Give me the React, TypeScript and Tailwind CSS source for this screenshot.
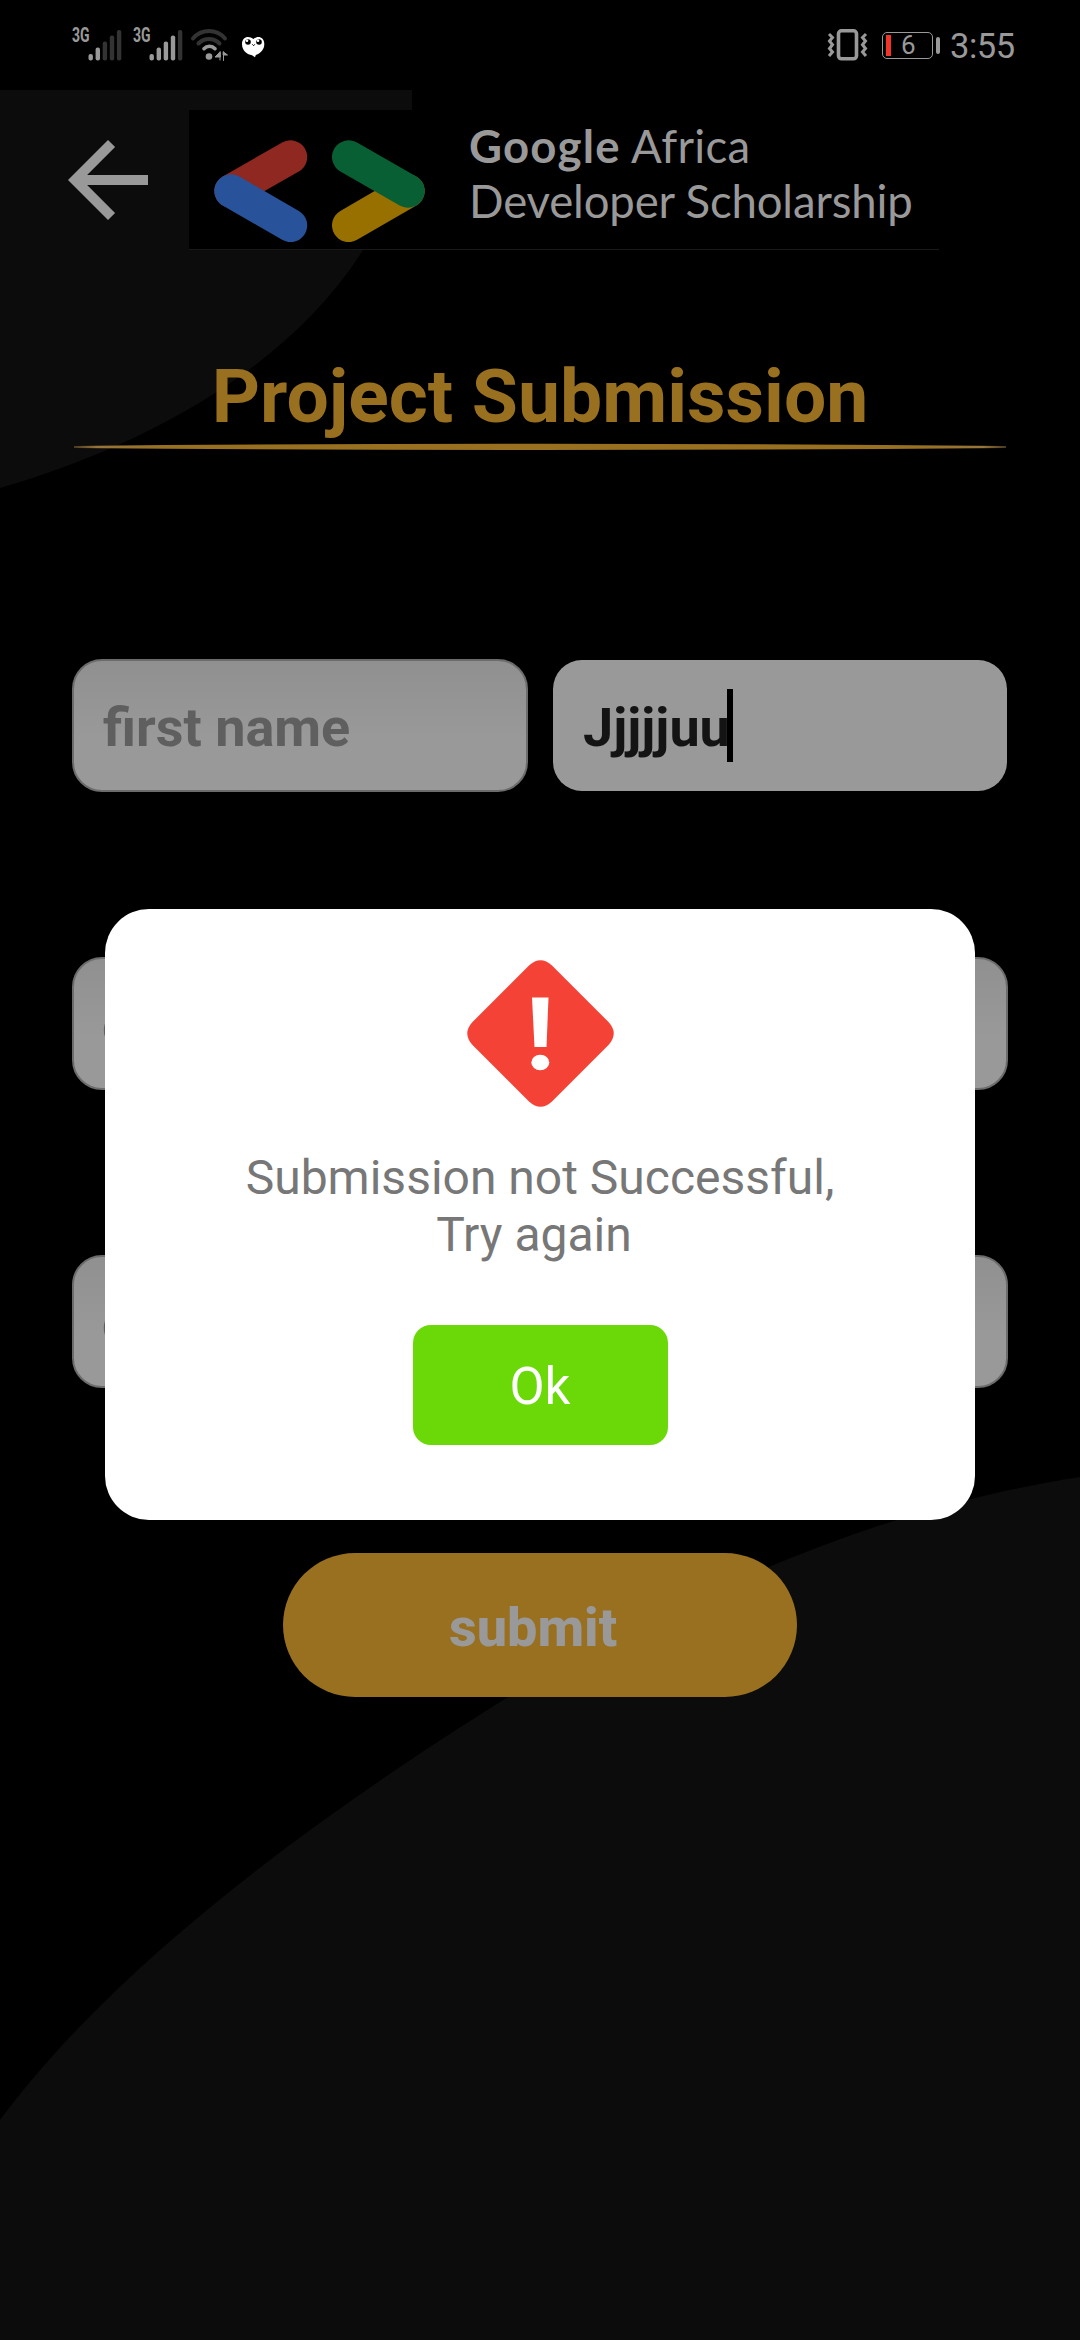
const heights = [6.5, 13, 19, 25, 30.5];

function Signal({ active }: { active: number }) {
  return (
    <div className="relative h-8 w-[50px]">
      <span className="absolute left-0 top-0 origin-top-left scale-x-[.72] font-bold text-[19.5px] leading-[14px] text-[#999]">3G</span>
      <svg viewBox="0 0 50 32" className="absolute inset-0 h-8 w-[50px]">
        {heights.map((h, i) => (
          <rect key={i} x={16.5 + i * 7.1} y={31.5 - h} width="4.4" height={h} rx="2" fill={i < active ? "#999" : "#333"} />
        ))}
      </svg>
    </div>
  );
}

function StatusBar() {
  return (
    <div className="flex h-[90px] items-start bg-black pl-[72px] pr-[66px] pt-[29px] text-[#999]">
      <Signal active={2} />
      <div className="ml-[11px]">
        <Signal active={4} />
      </div>
      <svg viewBox="0 0 40 32" className="ml-[7px] h-8 w-10" fill="none" strokeLinecap="round">
        <path d="M3 9.5C11.500-.4 26.500-.4 35 9.500" stroke="#333" strokeWidth="4" />
        <path d="M8.500 14.500C14.500 8.500 23.500 8.500 29.500 14.500" stroke="#333" strokeWidth="4" />
        <path d="M14 19.700C17 16.500 22 16.500 25 19.700" stroke="#999" strokeWidth="3.600" />
        <circle cx="19" cy="27.500" r="3.300" fill="#999" />
        <path d="M30 23v8M30 23l-5 5h5zM33.500 23v8.500M33.500 23l4 3h-4z" stroke="#999" strokeWidth="1" fill="#999" />
      </svg>
      <svg viewBox="0 0 24 22" className="ml-[11px] mt-[6.500px] h-[22px] w-6">
        <path d="M12.500 3C8-.8 1 .3 1 8c0 7 5.500 10.500 10 11.300l3 1.900.8-2.200C20 17 23.300 13.500 23.300 8c0-7.500-7-8.800-10.800-5z" fill="#fff" />
        <circle cx="7" cy="6" r="2.800" fill="#000" />
        <circle cx="18" cy="6" r="2.800" fill="#000" />
        <circle cx="6" cy="4.700" r="1.300" fill="#fff" />
        <circle cx="17" cy="4.700" r="1.300" fill="#fff" />
        <path d="M11.300 8.300l1.300 1.400 1.200-1.400" stroke="#000" fill="none" />
      </svg>
      <div className="grow" />
      <svg viewBox="0 0 42 32" className="h-8 w-[42px]" fill="none" stroke="#999">
        <rect x="11.500" y="1.800" width="18" height="28" rx="3" strokeWidth="3.600" />
        <path d="M2 5l3.500 3.500L2.500 12l3 3.700-3 3.800 3 3.500L2 27M39 5l-3.500 3.500 3 3.500-3 3.700 3 3.800-3 3.500L39 27" strokeWidth="3" />
      </svg>
      <div className="ml-[13px] mt-[3px] flex h-[27px] w-[51px] items-center rounded-[5px] border border-[#999] pl-[3px]">
        <div className="h-[21px] w-[5px] bg-[#f03528]" />
        <div className="ml-[10px] text-[26px] leading-[27px]">6</div>
      </div>
      <div className="ml-[3px] mt-[8px] h-[17px] w-1 rounded-sm bg-[#999]" />
      <div className="ml-[10px] mt-[-3px] w-[64px] whitespace-nowrap text-[34.500px] leading-[40px] tracking-[-0.5px]">3:55</div>
    </div>
  );
}

function GadsLogo() {
  return (
    <svg viewBox="214 140 211 103" className="h-[103px] w-[211px]" fill="none" strokeWidth="33.400" strokeLinecap="round">
      <path d="M290.500 157L231 191" stroke="#8f2820" />
      <path d="M231 191L290.500 225.400" stroke="#28529a" />
      <path d="M348.700 225.400L408 191" stroke="#987000" />
      <path d="M348.700 157L408 191" stroke="#085f34" />
    </svg>
  );
}

function Header() {
  return (
    <header className="flex h-[160px]">
      <div className="flex h-[160px] w-[189px] items-center pl-12 pt-5">
        <svg viewBox="0 0 24 24" className="h-[120px] w-[120px]" fill="#999">
          <path d="M20 11H7.830l5.590-5.590L12 4l-8 8 8 8 1.410-1.410L7.830 13H20v-2z" />
        </svg>
      </div>
      <div className="mt-5 flex h-[140px] w-[750px] items-start border-b border-[#191919] bg-black pl-[25px] pt-[30px]">
        <GadsLogo />
        <div className="ml-[44px] mt-[-22px] whitespace-nowrap font-['Lato',sans-serif] text-[45.500px] leading-[55px] text-[#999]">
          <div className="tracking-[0.3px]"><b className="tracking-[1.2px]">Google</b> Africa</div>
          <div className="tracking-[-0.15px]">Developer Scholarship</div>
        </div>
      </div>
    </header>
  );
}

const field = "flex h-[133px] items-center rounded-[30px] border-2 border-[#6c6c6c] bg-linear-to-b from-[#909090] to-[#999] to-60% pt-[3px] text-[54px] font-bold text-[#5f5f5f]";

function Dialog() {
  return (
    <div className="absolute left-[105px] top-[909px] flex h-[611px] w-[870px] flex-col items-center rounded-[44px] bg-white pt-[51px]">
      <svg viewBox="0 0 147 147" className="h-[147px] w-[147px]">
        <path d="M62 5.500Q73.500-5 85 5.500L141.500 62Q152 73.500 141.500 85L85 141.500Q73.500 152 62 141.500L5.500 85Q-5 73.500 5.500 62Z" fill="#f44336" />
        <path d="M65 37.500h16.500L79.500 87H67.500z" fill="#fff" />
        <ellipse cx="73.300" cy="102.500" rx="9" ry="7.700" fill="#fff" />
      </svg>
      <p className="mt-[42px] whitespace-pre text-center text-[48px] leading-[57px] text-[#777]">
        Submission not Successful,
        <br />
        <span className="pr-[12px]">Try again</span>
      </p>
      <button className="mt-[62px] h-[120px] w-[255px] rounded-[18px] bg-[#6bd807] pt-[5px] text-[51px] text-white">Ok</button>
    </div>
  );
}

export default function App() {
  return (
    <div className="relative h-[2340px] w-[1080px] overflow-hidden bg-black font-['Roboto',sans-serif]">
      <svg viewBox="0 0 1080 2340" className="absolute inset-0 h-full w-full" fill="#0c0c0c">
        <path d="M0 90H412V160Q388 215 363 250C290 366 150 444 0 488Z" />
        <path d="M1080 1477C880 1508 700 1588 508 1697C330 1808 120 1958 0 2120V2340H1080Z" />
      </svg>
      <div className="relative">
        <StatusBar />
        <Header />
        <h1 className="mt-[99px] text-center text-[75px] font-bold leading-[94px] text-[#987020]">Project Submission</h1>
        <svg viewBox="0 0 932 8" className="ml-[74px] h-2 w-[932px]">
          <defs>
            <linearGradient id="rule">
              <stop offset="0" stopColor="#4a3a20" />
              <stop offset=".025" stopColor="#98753a" />
              <stop offset=".1" stopColor="#987020" />
              <stop offset=".9" stopColor="#987020" />
              <stop offset=".975" stopColor="#98753a" />
              <stop offset="1" stopColor="#4a3a20" />
            </linearGradient>
          </defs>
          <path d="M0 3Q466-1.500 932 3V5Q466 9 0 5Z" fill="url(#rule)" />
        </svg>
        <div className="ml-[72px] mt-[208px] flex h-[133px] w-[936px] items-center">
          <div className={field + " w-[456px] pl-[29px]"}>first name</div>
          <div className="ml-[25px] flex h-[131px] w-[454px] items-center rounded-[29px] bg-[#999] pl-[30px] text-[54px] font-bold text-[#141414]">
            <span className="pt-[3px]">Jjjjjuu</span>
            <span className="ml-[-3px] h-[73px] w-[6px] bg-black" />
          </div>
        </div>
        <div className={field + " ml-[72px] mt-[165px] w-[936px] pl-[28px]"}>email</div>
        <div className={field + " ml-[72px] mt-[165px] w-[936px] pl-[28px]"}>github link</div>
        <button className="ml-[283px] mt-[165px] block h-[144px] w-[514px] rounded-full bg-[#987020] pr-[14px] pt-1 text-[54px] font-extrabold text-[#999]">submit</button>
      </div>
      <Dialog />
    </div>
  );
}
